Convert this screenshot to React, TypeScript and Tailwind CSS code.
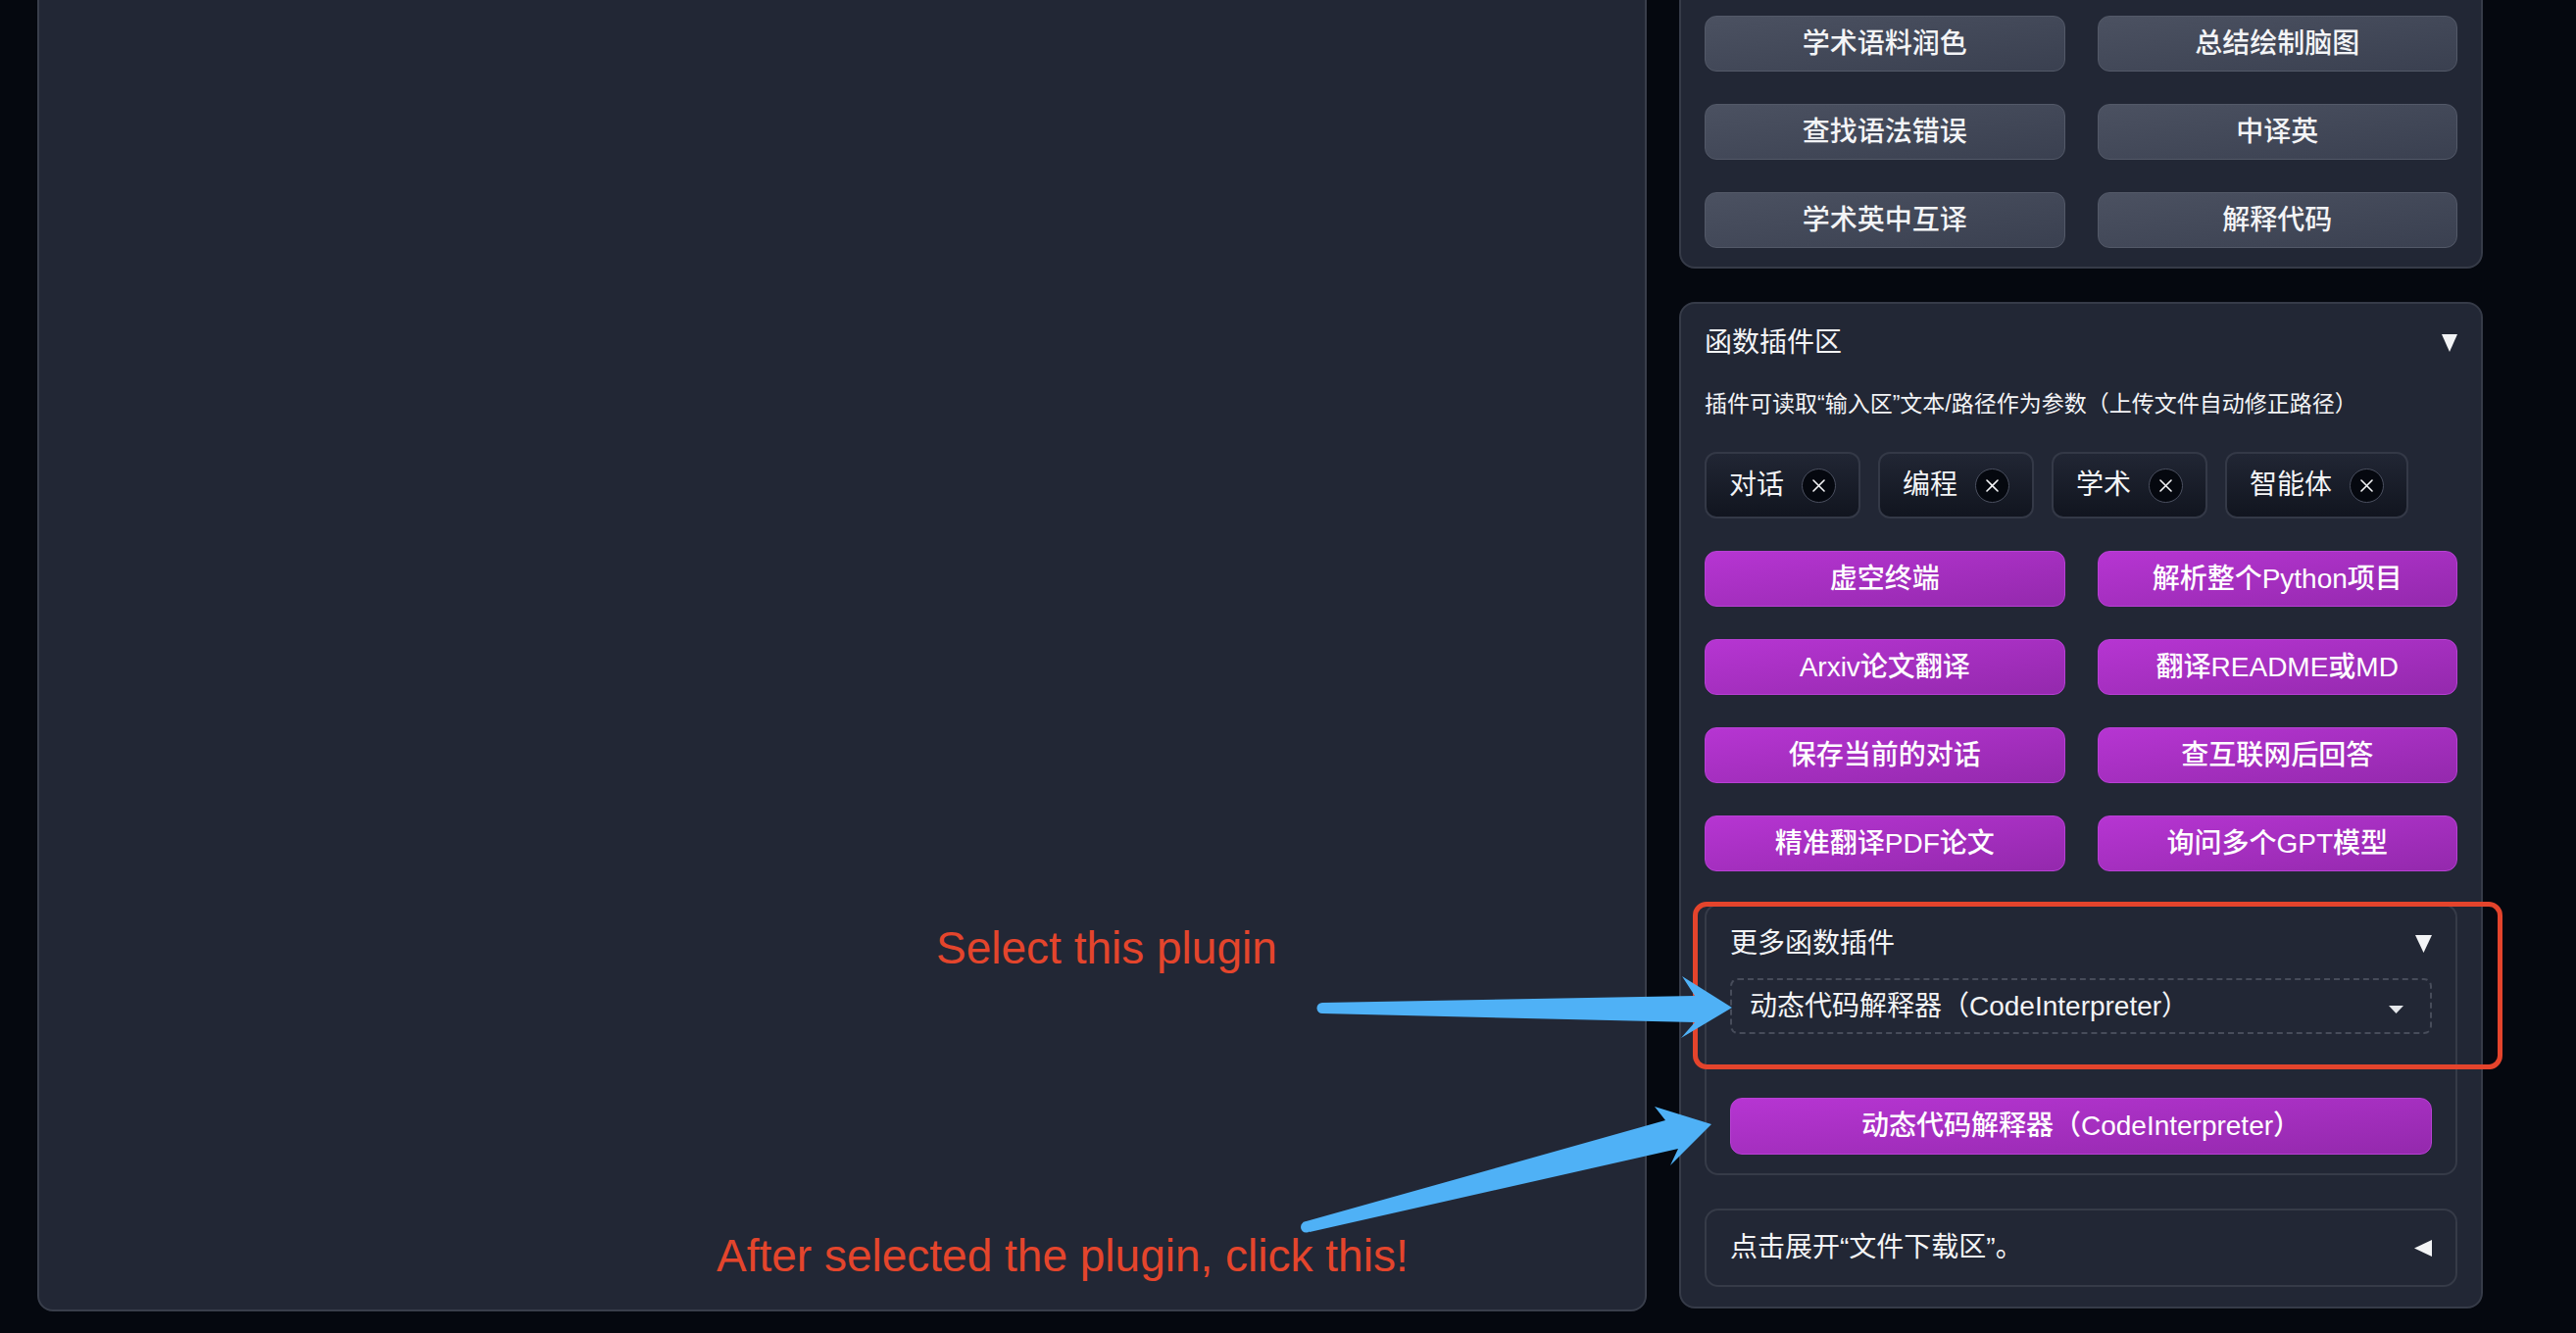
const grayButtons = ["学术语料润色", "总结绘制脑图", "查找语法错误", "中译英", "学术英中互译", "解释代码"];
const tags = ["对话", "编程", "学术", "智能体"];
const pluginButtons = [
  "虚空终端",
  "解析整个Python项目",
  "Arxiv论文翻译",
  "翻译README或MD",
  "保存当前的对话",
  "查互联网后回答",
  "精准翻译PDF论文",
  "询问多个GPT模型",
];

function DownTriangle({ w = 16, h = 18 }: { w?: number; h?: number }) {
  return (
    <svg width={w} height={h} viewBox={`0 0 ${w} ${h}`} className="shrink-0">
      <polygon points={`0,0 ${w},0 ${w / 2},${h}`} fill="#f3f4f6" />
    </svg>
  );
}

function GrayButton({ label }: { label: string }) {
  return (
    <button className="h-[57px] rounded-[12px] border border-[#535968] bg-gradient-to-br from-[#4b5161] to-[#3a4050] text-[28px] font-medium text-[#f3f4f6]">
      {label}
    </button>
  );
}

function PurpleButton({ label }: { label: string }) {
  return (
    <button className="h-[57px] rounded-[12px] border border-[#b840d4] bg-gradient-to-br from-[#b635d2] to-[#9429ad] text-[28px] font-medium text-white">
      {label}
    </button>
  );
}

function Tag({ label }: { label: string }) {
  return (
    <div className="flex h-[68px] items-center gap-[18px] rounded-[12px] border-2 border-[#343947] bg-gradient-to-b from-[#212634] to-[#11151f] pl-[23px] pr-[23px]">
      <span className="text-[28px] leading-none text-[#f3f4f6]">{label}</span>
      <span className="flex h-[35px] w-[35px] items-center justify-center rounded-full border border-[#4b5060] bg-[#05080f]">
        <svg width="13" height="13" viewBox="0 0 13 13">
          <path d="M1 1 L12 12 M12 1 L1 12" stroke="#f3f4f6" strokeWidth="1.6" strokeLinecap="round" />
        </svg>
      </span>
    </div>
  );
}

export default function App() {
  return (
    <div className="relative h-[1360px] w-[2628px] overflow-hidden bg-[#05080f] font-['Liberation_Sans','Noto_Sans_CJK_SC',sans-serif] text-white">
      <div className="-mt-[40px] flex items-start gap-[33px] pl-[38px]">
        {/* chat area */}
        <div className="h-[1378px] w-[1642px] shrink-0 rounded-[16px] border-2 border-[#393e4b] bg-[#222735]" />

        {/* right side */}
        <div className="flex w-[820px] shrink-0 flex-col gap-[34px]">
          <div className="rounded-[16px] border-2 border-[#363b48] bg-[#222735] px-[24px] pt-[54px] pb-[19px]">
            <div className="grid grid-cols-2 gap-[33px]">
              {grayButtons.map((b) => (
                <GrayButton key={b} label={b} />
              ))}
            </div>
          </div>

          <div className="rounded-[16px] border-2 border-[#363b48] bg-[#222735] px-[24px] pt-[20px] pb-[20px]">
            <div className="flex h-[40px] items-center justify-between">
              <span className="text-[28px] text-[#f3f4f6]">函数插件区</span>
              <DownTriangle />
            </div>
            <div className="mt-[27px] text-[23px] leading-[30px] text-[#f3f4f6]">
              插件可读取“输入区”文本/路径作为参数（上传文件自动修正路径）
            </div>
            <div className="mt-[34px] flex gap-[18px]">
              {tags.map((t) => (
                <Tag key={t} label={t} />
              ))}
            </div>
            <div className="mt-[33px] grid grid-cols-2 gap-[33px]">
              {pluginButtons.map((b) => (
                <PurpleButton key={b} label={b} />
              ))}
            </div>

            <div className="mt-[33px] rounded-[14px] border-2 border-[#363b48] px-[24px] pt-[19px] pb-[19px]">
              <div className="flex h-[40px] items-center justify-between">
                <span className="text-[28px] text-[#f3f4f6]">更多函数插件</span>
                <DownTriangle w={17} />
              </div>
              <div className="mt-[15px] flex h-[57px] items-center justify-between rounded-[8px] border-2 border-dashed border-[#474c5a] pl-[18px] pr-[27px]">
                <span className="text-[28px] text-[#f3f4f6]">动态代码解释器（CodeInterpreter）</span>
                <svg width="15" height="8" viewBox="0 0 15 8" className="mt-[6px]">
                  <polygon points="0,0 15,0 7.5,8" fill="#e5e7eb" />
                </svg>
              </div>
              <button className="mt-[65px] h-[58px] w-full rounded-[12px] border border-[#b840d4] bg-gradient-to-br from-[#b635d2] to-[#9429ad] text-[28px] font-medium text-white">
                动态代码解释器（CodeInterpreter）
              </button>
            </div>

            <div className="mt-[34px] flex h-[80px] items-center justify-between rounded-[14px] border-2 border-[#363b48] px-[24px]">
              <span className="text-[28px] text-[#f3f4f6]">点击展开“文件下载区”。</span>
              <svg width="18" height="17" viewBox="0 0 18 17" className="shrink-0">
                <polygon points="18,0 18,17 0,8.5" fill="#f3f4f6" />
              </svg>
            </div>
          </div>
        </div>
      </div>

      {/* annotations */}
      <div className="pointer-events-none absolute left-[1727px] top-[920px] h-[171px] w-[826px] rounded-[14px] border-[5px] border-[#e4442c]" />
      <div className="pointer-events-none absolute left-[955px] top-[944px] text-[46px] leading-none whitespace-nowrap text-[#e4452c]">
        Select this plugin
      </div>
      <div className="pointer-events-none absolute left-[731px] top-[1258px] text-[46px] leading-none whitespace-nowrap text-[#e4452c]">
        After selected the plugin, click this!
      </div>
      <svg className="pointer-events-none absolute left-0 top-0" width="2628" height="1360" viewBox="0 0 2628 1360">
        <g fill="#4fb1f6">
          <polygon points="1349,1023 1729,1016 1716,996 1767,1028 1715,1059 1729,1043 1349,1034" />
          <circle cx="1349" cy="1028.5" r="5.5" />
          <polygon points="1329,1247 1699,1143 1688,1129 1746,1147 1704,1189 1712,1172 1336,1257" />
          <circle cx="1332.5" cy="1252" r="5.5" />
        </g>
      </svg>
    </div>
  );
}
